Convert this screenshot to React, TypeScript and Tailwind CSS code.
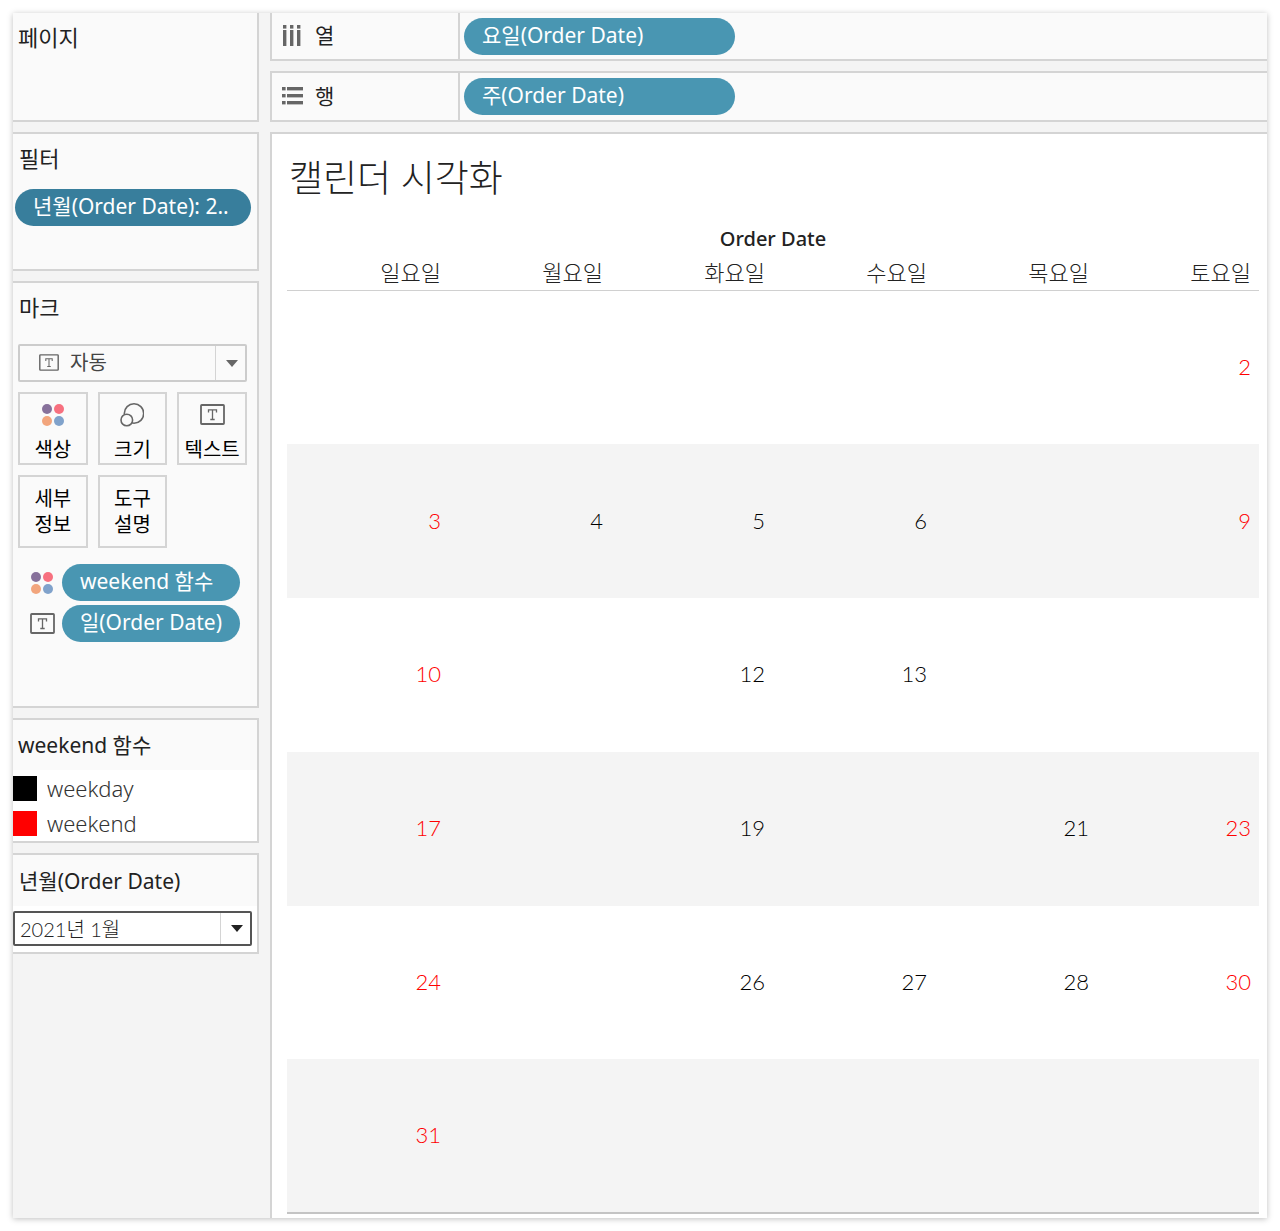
import React, { useState } from "react";

const WEEKDAYS = ["일요일", "월요일", "화요일", "수요일", "목요일", "토요일"];

const WEEKS: (number | null)[][] = [
  [null, null, null, null, null, 2],
  [3, 4, 5, 6, null, 9],
  [10, null, 12, 13, null, null],
  [17, null, 19, null, 21, 23],
  [24, null, 26, 27, 28, 30],
  [31, null, null, null, null, null],
];

const isWeekend = (col: number) => col === 0 || col === 5;

const ColorIcon: React.FC = () => (
  <svg className="w-6 h-6" viewBox="0 0 24 24" aria-hidden="true">
    <circle cx="6" cy="6" r="5" fill="#87719b" />
    <circle cx="18" cy="6" r="5" fill="#f7707f" />
    <circle cx="6" cy="18" r="5" fill="#f2a57d" />
    <circle cx="18" cy="18" r="5" fill="#80a2cb" />
  </svg>
);

const SizeIcon: React.FC = () => (
  <svg
    className="w-6 h-6"
    viewBox="0 0 24 24"
    fill="#fafafa"
    stroke="#666"
    strokeWidth="1.6"
    aria-hidden="true"
  >
    <circle cx="14" cy="10.5" r="9.7" />
    <circle cx="6.8" cy="17" r="5.8" />
  </svg>
);

const TextIcon: React.FC<{ className: string }> = ({ className }) => (
  <svg
    className={className}
    viewBox="0 0 25 21"
    fill="none"
    stroke="#666"
    aria-hidden="true"
  >
    <rect x="1" y="1" width="23" height="19" rx="0.8" strokeWidth="1.8" />
    <path
      d="M8.5 8.5V5.8H16.5V8.5M12.5 5.8V15.5M10.3 15.5H14.7"
      strokeWidth="1.3"
    />
  </svg>
);

const ColumnsIcon: React.FC = () => (
  <svg className="w-[22px] h-[22px]" viewBox="0 0 22 22" fill="#666" aria-hidden="true">
    {[2, 9, 16].map((x) => (
      <g key={x}>
        <rect x={x} y="0" width="3.4" height="3.6" />
        <rect x={x} y="5" width="3.4" height="16" />
      </g>
    ))}
  </svg>
);

const RowsIcon: React.FC = () => (
  <svg className="w-[22px] h-[22px]" viewBox="0 0 22 22" fill="#666" aria-hidden="true">
    {[1, 8, 15].map((y) => (
      <g key={y}>
        <rect x="1" y={y} width="3.6" height="3.4" />
        <rect x="6" y={y} width="16" height="3.4" />
      </g>
    ))}
  </svg>
);

const Arrow: React.FC<{ className: string }> = ({ className }) => (
  <svg className={className} viewBox="0 0 12 7" fill="currentColor" aria-hidden="true">
    <path d="M0 0H12L6 7Z" />
  </svg>
);

const Pill: React.FC<{ className: string; children: React.ReactNode }> = ({
  className,
  children,
}) => (
  <button
    className={`h-[37px] rounded-full pb-[3px] text-left text-[21px] leading-[34px] text-white whitespace-nowrap ${className}`}
  >
    {children}
  </button>
);

const MarkButton: React.FC<{ icon?: React.ReactNode; children: React.ReactNode }> = ({
  icon,
  children,
}) => (
  <button className="flex h-[73px] flex-col items-center justify-center border-2 border-[#d4d4d4] bg-[#fafafa] text-xl leading-[26px] text-black whitespace-nowrap">
    {icon && <span className="mb-2.5 mt-2 flex h-6 items-center">{icon}</span>}
    <span>{children}</span>
  </button>
);

const Shelf: React.FC<{
  icon: React.ReactNode;
  label: string;
  className: string;
  children: React.ReactNode;
}> = ({ icon, label, className, children }) => (
  <div className={`flex border-b-2 border-l-2 border-[#d4d4d4] bg-[#fafafa] ${className}`}>
    <div className="flex w-[188px] items-center gap-3 border-r-2 border-[#d4d4d4] pl-[9px]">
      {icon}
      <span>{label}</span>
    </div>
    <div className="flex items-center pl-1">{children}</div>
  </div>
);

const App: React.FC = () => {
  const [mark, setMark] = useState("auto");
  const [month, setMonth] = useState("2021-01");

  return (
    <div className="bg-white p-[13px] font-['Noto_Sans','Noto_Sans_CJK_KR',sans-serif] text-[21px] text-[#222]">
      <div className="flex gap-[11px] bg-[#f4f4f4] shadow-[0_1px_6px_rgba(0,0,0,0.25)]">
        <aside className="flex w-[246px] shrink-0 flex-col gap-2.5">
          <section className="min-h-[109px] border-b-2 border-r-2 border-[#d4d4d4] bg-[#fafafa] pl-[5px] pt-2.5">
            <h2 className="text-[22px] leading-7">페이지</h2>
          </section>

          <section className="min-h-[139px] border-y-2 border-r-2 border-[#d4d4d4] bg-[#fafafa] pl-0.5 pt-2.5">
            <h2 className="pl-1 text-[22px] leading-7">필터</h2>
            <Pill className="mt-[17px] w-[236px] bg-[#387e9c] pl-[18px]">
              년월(Order Date): 2..
            </Pill>
          </section>

          <section className="min-h-[427px] border-y-2 border-r-2 border-[#d4d4d4] bg-[#fafafa] pl-[5px] pt-2.5">
            <h2 className="pl-px text-[22px] leading-7">마크</h2>
            <div className="relative mt-[23px] mr-2.5">
              <select
                aria-label="마크 유형"
                value={mark}
                onChange={(e) => setMark(e.target.value)}
                className="h-[38px] w-full appearance-none rounded-xs border-2 border-[#ccc] bg-[#fafafa] pl-[50px] text-xl text-[#444]"
              >
                <option value="auto">자동</option>
              </select>
              <TextIcon className="pointer-events-none absolute left-[21px] top-2.5 h-[17px] w-5" />
              <span className="pointer-events-none absolute inset-y-0.5 right-0 flex w-8 items-center justify-center border-l border-[#d4d4d4] text-[#666]">
                <Arrow className="h-[7px] w-3" />
              </span>
            </div>
            <div className="mr-2.5 mt-2.5 grid grid-cols-3 gap-2.5">
              <MarkButton icon={<ColorIcon />}>색상</MarkButton>
              <MarkButton icon={<SizeIcon />}>크기</MarkButton>
              <MarkButton icon={<TextIcon className="h-[21px] w-[25px]" />}>
                텍스트
              </MarkButton>
              <MarkButton>
                세부
                <br />
                정보
              </MarkButton>
              <MarkButton>
                도구
                <br />
                설명
              </MarkButton>
            </div>
            <div className="mt-4 flex flex-col gap-1 pl-3">
              <div className="flex items-center gap-[7px]">
                <span className="flex w-[25px]">
                  <ColorIcon />
                </span>
                <Pill className="w-[178px] bg-[#4996b2] pl-[18px]">weekend 함수</Pill>
              </div>
              <div className="flex items-center gap-[7px]">
                <TextIcon className="h-[21px] w-[25px]" />
                <Pill className="w-[178px] bg-[#4996b2] pl-[18px]">일(Order Date)</Pill>
              </div>
            </div>
          </section>

          <section className="border-y-2 border-r-2 border-[#d4d4d4] bg-white">
            <h2 className="flex h-[50px] items-center bg-[#fafafa] pl-[5px] pt-0.5">
              weekend 함수
            </h2>
            <ul className="flex flex-col gap-2.5 pb-[5px] pt-1.5 text-[22px] font-light text-[#333]">
              <li className="flex items-center gap-2.5 leading-[25px]">
                <span className="h-[25px] w-6 bg-black" />
                weekday
              </li>
              <li className="flex items-center gap-2.5 leading-[25px]">
                <span className="h-[25px] w-6 bg-[#ff0000]" />
                weekend
              </li>
            </ul>
          </section>

          <section className="border-y-2 border-r-2 border-[#d4d4d4] bg-white">
            <label
              htmlFor="month"
              className="flex h-[51px] items-center bg-[#fafafa] pl-1.5 pt-0.5"
            >
              년월(Order Date)
            </label>
            <div className="relative mb-1.5 mr-[5px] mt-[5px]">
              <select
                id="month"
                value={month}
                onChange={(e) => setMonth(e.target.value)}
                className="block h-[35px] w-full appearance-none rounded-xs border-2 border-[#555] bg-white pl-[5px] font-['Lato','Noto_Sans_CJK_KR',sans-serif] text-xl font-light text-[#222]"
              >
                <option value="2021-01">2021년 1월</option>
              </select>
              <span className="pointer-events-none absolute inset-y-0.5 right-0 flex w-8 items-center justify-center border-l border-[#d4d4d4]">
                <Arrow className="h-[7px] w-3" />
              </span>
            </div>
          </section>
        </aside>

        <main className="flex min-w-0 flex-1 flex-col gap-2.5">
          <Shelf icon={<ColumnsIcon />} label="열" className="h-12">
            <Pill className="w-[271px] bg-[#4996b2] pl-[18px]">요일(Order Date)</Pill>
          </Shelf>
          <Shelf icon={<RowsIcon />} label="행" className="h-[51px] border-t-2">
            <Pill className="w-[271px] bg-[#4996b2] pl-[18px]">주(Order Date)</Pill>
          </Shelf>

          <section className="flex-1 border-l-2 border-t-2 border-[#d4d4d4] bg-white pb-1 pl-[15px] pr-2 pt-[22px]">
            <h1 className="pl-0.5 text-[37px] font-light leading-[44px]">캘린더 시각화</h1>
            <table className="mt-[22px] h-[992px] w-full table-fixed border-collapse border-b-2 border-[#c4c4c4] text-right text-[22px] font-light">
              <thead>
                <tr className="h-[34px]">
                  <th colSpan={6} className="text-center text-xl font-medium leading-8">
                    Order Date
                  </th>
                </tr>
                <tr className="h-[34px] border-b border-[#d0d0d0]">
                  {WEEKDAYS.map((day) => (
                    <th key={day} className="pb-0.5 pr-2 font-light leading-8">
                      {day}
                    </th>
                  ))}
                </tr>
              </thead>
              <tbody className="font-['Lato',sans-serif]">
                {WEEKS.map((week, i) => (
                  <tr key={i} className="h-[153px] even:bg-[#f4f4f4]">
                    {week.map((date, col) => (
                      <td
                        key={col}
                        className={`pb-0.5 pr-2 ${isWeekend(col) ? "text-[#ff0000]" : "text-black"}`}
                      >
                        {date}
                      </td>
                    ))}
                  </tr>
                ))}
              </tbody>
            </table>
          </section>
        </main>
      </div>
    </div>
  );
};

export default App;
